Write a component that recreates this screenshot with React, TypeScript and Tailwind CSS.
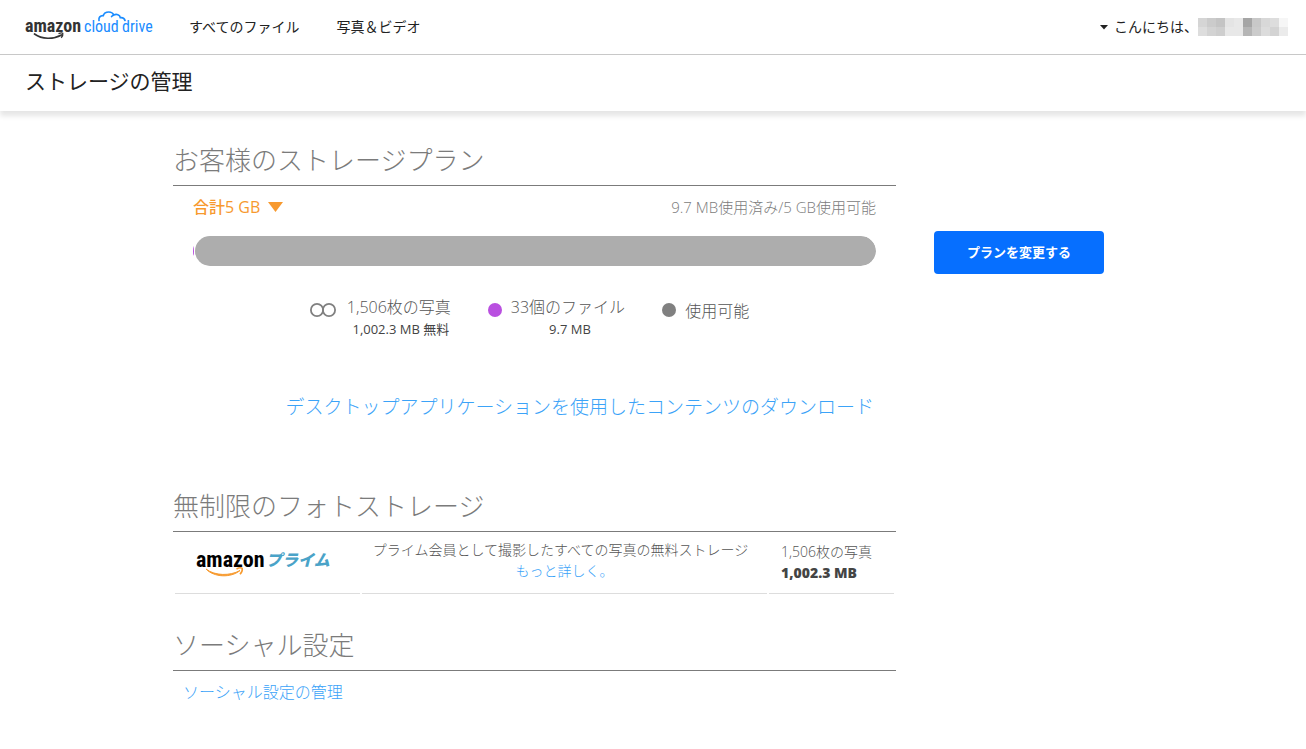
import type { ReactNode } from 'react';

const blurredName = [
  ['#d5d5d5', '#cbcbcb', '#c4c4c4', '#e4e4e4', '#e8e8e8', '#a5a5a5', '#c8c8c8', '#d8d8d8', '#dddddd', '#f6f6f6'],
  ['#dddddd', '#d3d3d3', '#cecece', '#e8e8e8', '#e8e8e8', '#b5b5b5', '#cbcbcb', '#dcdcdc', '#d3d3d3', '#ebebeb'],
];

function CloudDriveLogo() {
  return (
    <svg width="130" height="34" viewBox="0 0 130 34" role="img" aria-label="amazon cloud drive">
      <g fontFamily="'Roboto Condensed', Roboto, sans-serif">
        <text x="0" y="22" fontSize="18" fontWeight="700" fill="#333333">amazon</text>
        <text x="59" y="22" fontSize="16" fill="#1a8cff">cloud</text>
        <text x="97" y="22" fontSize="16" fill="#1a8cff">drive</text>
      </g>
      <path d="M9.500 24c7.500 5.400 18.500 5.600 27 1" fill="none" stroke="#333333" strokeWidth="1.700" strokeLinecap="round" />
      <path d="M33.500 23.700c1.800-.8 3.600-.9 4.300-.5.3 1.300-.4 3.200-1.600 4.500" fill="none" stroke="#333333" strokeWidth="1.300" />
      <path
        d="M74 10.500c-.7-3 1.300-5.200 4.300-4.900C79 2.900 81.300 2 83.800 2c2.400 0 4.200 1.200 5 3 2.700-1.400 6-.3 6.500 2.600 2.500-.3 4.200.8 4.700 2.900M88.800 5c-.9.300-1.600.8-2.200 1.500"
        fill="none"
        stroke="#1a8cff"
        strokeWidth="1.700"
        strokeLinecap="round"
      />
    </svg>
  );
}

function PrimeLogo() {
  return (
    <svg width="140" height="42" viewBox="0 -6 140 42" role="img" aria-label="amazonプライム">
      <text x="0" y="18" fontSize="22" fontWeight="700" fill="#000000" fontFamily="'Roboto Condensed', Roboto, sans-serif">
        amazon
      </text>
      <text x="70" y="17" fontSize="16" fontWeight="900" fontStyle="italic" fill="#4aa3c8" fontFamily="'Noto Sans CJK JP', sans-serif">
        プライム
      </text>
      <path d="M10 20c9 7 24 7 34 1.500-9 7.600-26 7-34-1.500z" fill="#f79a2e" stroke="#f79a2e" strokeWidth="1" strokeLinejoin="round" />
      <path d="M40.500 20c2.300-1.200 4.900-1.200 5.700-.6.400 1.800-.6 4.200-2.200 5.800" fill="none" stroke="#f79a2e" strokeWidth="1.600" />
    </svg>
  );
}

function SectionTitle({ children }: { children: ReactNode }) {
  return (
    <h2 className="border-b border-[#7b7b7b] pb-[7px] text-[26px] leading-9 font-light text-[#7b7b7b]">
      {children}
    </h2>
  );
}

export default function App() {
  return (
    <div className="min-h-screen bg-white font-['Open_Sans','Noto_Sans_CJK_JP',sans-serif] text-[#222222]">
      <header className="shadow-[0_5px_5px_rgba(0,0,0,0.1)]">
        <div className="flex h-[55px] items-center border-b border-[#c8c8c8] pr-[18px] pl-[25px] text-sm">
          <a href="#home">
            <CloudDriveLogo />
          </a>
          <nav className="ml-[34px] flex flex-1 gap-[37px]">
            <a href="#files">すべてのファイル</a>
            <a href="#photos">写真＆ビデオ</a>
          </nav>
          <button type="button" className="flex items-center">
            <svg width="8" height="5" viewBox="0 0 8 5" className="mr-[6px]" aria-hidden="true">
              <path d="M0 0h8L4 4.500z" fill="#222222" />
            </svg>
            こんにちは、
            <svg width="90" height="18" viewBox="0 0 90 18" shapeRendering="crispEdges" aria-hidden="true">
              {blurredName.map((row, y) =>
                row.map((color, x) => (
                  <rect key={`${x}-${y}`} x={x * 9} y={y * 9} width="9" height="9" fill={color} />
                ))
              )}
            </svg>
          </button>
        </div>
        <div className="flex h-14 items-center px-[25px] pb-1">
          <h1 className="text-[21px] leading-8">ストレージの管理</h1>
        </div>
      </header>

      <main className="mx-auto max-w-[960px] pt-[31px] pb-10">
        <div className="flex items-start gap-[38px]">
          <section className="max-w-[723px] flex-1">
            <SectionTitle>お客様のストレージプラン</SectionTitle>
            <div className="px-5 pt-[9px]">
              <div className="flex items-center justify-between leading-6">
                <button type="button" className="flex items-center gap-2 text-base font-medium text-[#f7992e]">
                  合計5 GB
                  <svg width="15" height="10" viewBox="0 0 15 10" aria-hidden="true">
                    <path d="M0 0h15L7.500 10z" fill="#f7992e" />
                  </svg>
                </button>
                <p className="text-[15px] font-light text-[#7b7b7b]">9.7 MB使用済み/5 GB使用可能</p>
              </div>
              <div className="mt-[17px] flex h-[30px] gap-px overflow-hidden rounded-full">
                <div className="w-px bg-[#b94fe0]" />
                <div className="flex-1 rounded-full bg-[#adadad]" />
              </div>
            </div>

            <ul className="mt-[30px] flex justify-center gap-[37px] pr-[10px] text-base leading-[22px] font-light text-[#555555]">
              <li className="flex gap-[11px]">
                <svg width="26" height="14" viewBox="0 0 26 14" className="mt-[7px]" aria-hidden="true">
                  <g fill="none" stroke="#808080" strokeWidth="1.800">
                    <circle cx="7" cy="7" r="6.100" />
                    <circle cx="19" cy="7" r="6.100" />
                  </g>
                </svg>
                <div className="text-center">
                  <p>1,506枚の写真</p>
                  <p className="pl-1 text-[13px] font-normal text-[#444444]">1,002.3 MB 無料</p>
                </div>
              </li>
              <li className="flex gap-[9px]">
                <span className="mt-[7px] size-[14px] rounded-full bg-[#b94fe0]" />
                <div className="text-center">
                  <p>33個のファイル</p>
                  <p className="pl-1 text-[13px] font-normal text-[#444444]">9.7 MB</p>
                </div>
              </li>
              <li className="flex gap-[9px]">
                <span className="mt-[7px] size-[14px] rounded-full bg-[#808080]" />
                <p className="mt-1">使用可能</p>
              </li>
            </ul>

            <p className="mt-[51px] pr-[22px] text-right text-[19px] leading-8 font-light">
              <a href="#download" className="text-[#3ba3f8]">
                デスクトップアプリケーションを使用したコンテンツのダウンロード
              </a>
            </p>
          </section>

          <button
            type="button"
            className="mt-[89px] h-[43px] w-[170px] rounded bg-[#066fff] text-[13px] font-bold text-white"
          >
            プランを変更する
          </button>
        </div>

        <section className="mt-[65px] max-w-[723px]">
          <SectionTitle>無制限のフォトストレージ</SectionTitle>
          <table className="w-full table-fixed border-separate border-spacing-[2px] text-sm leading-[21px] font-light text-[#555555]">
            <tbody>
              <tr>
                <td className="h-[60px] w-[185px] border-b border-[#dddddd] pl-[21px]">
                  <PrimeLogo />
                </td>
                <td className="border-b border-[#dddddd] pr-2 pb-2 text-center">
                  <p>プライム会員として撮影したすべての写真の無料ストレージ</p>
                  <a href="#more" className="pl-2 text-[#3ba3f8]">もっと詳しく。</a>
                </td>
                <td className="w-[125px] border-b border-[#dddddd] pb-1 pl-3">
                  <p>1,506枚の写真</p>
                  <p className="font-extrabold text-[#444444]">1,002.3 MB</p>
                </td>
              </tr>
            </tbody>
          </table>
        </section>

        <section className="mt-[31px] max-w-[723px]">
          <SectionTitle>ソーシャル設定</SectionTitle>
          <p className="px-[10px] pt-[9px] text-base leading-6 font-light">
            <a href="#social" className="text-[#3ba3f8]">ソーシャル設定の管理</a>
          </p>
        </section>
      </main>
    </div>
  );
}
